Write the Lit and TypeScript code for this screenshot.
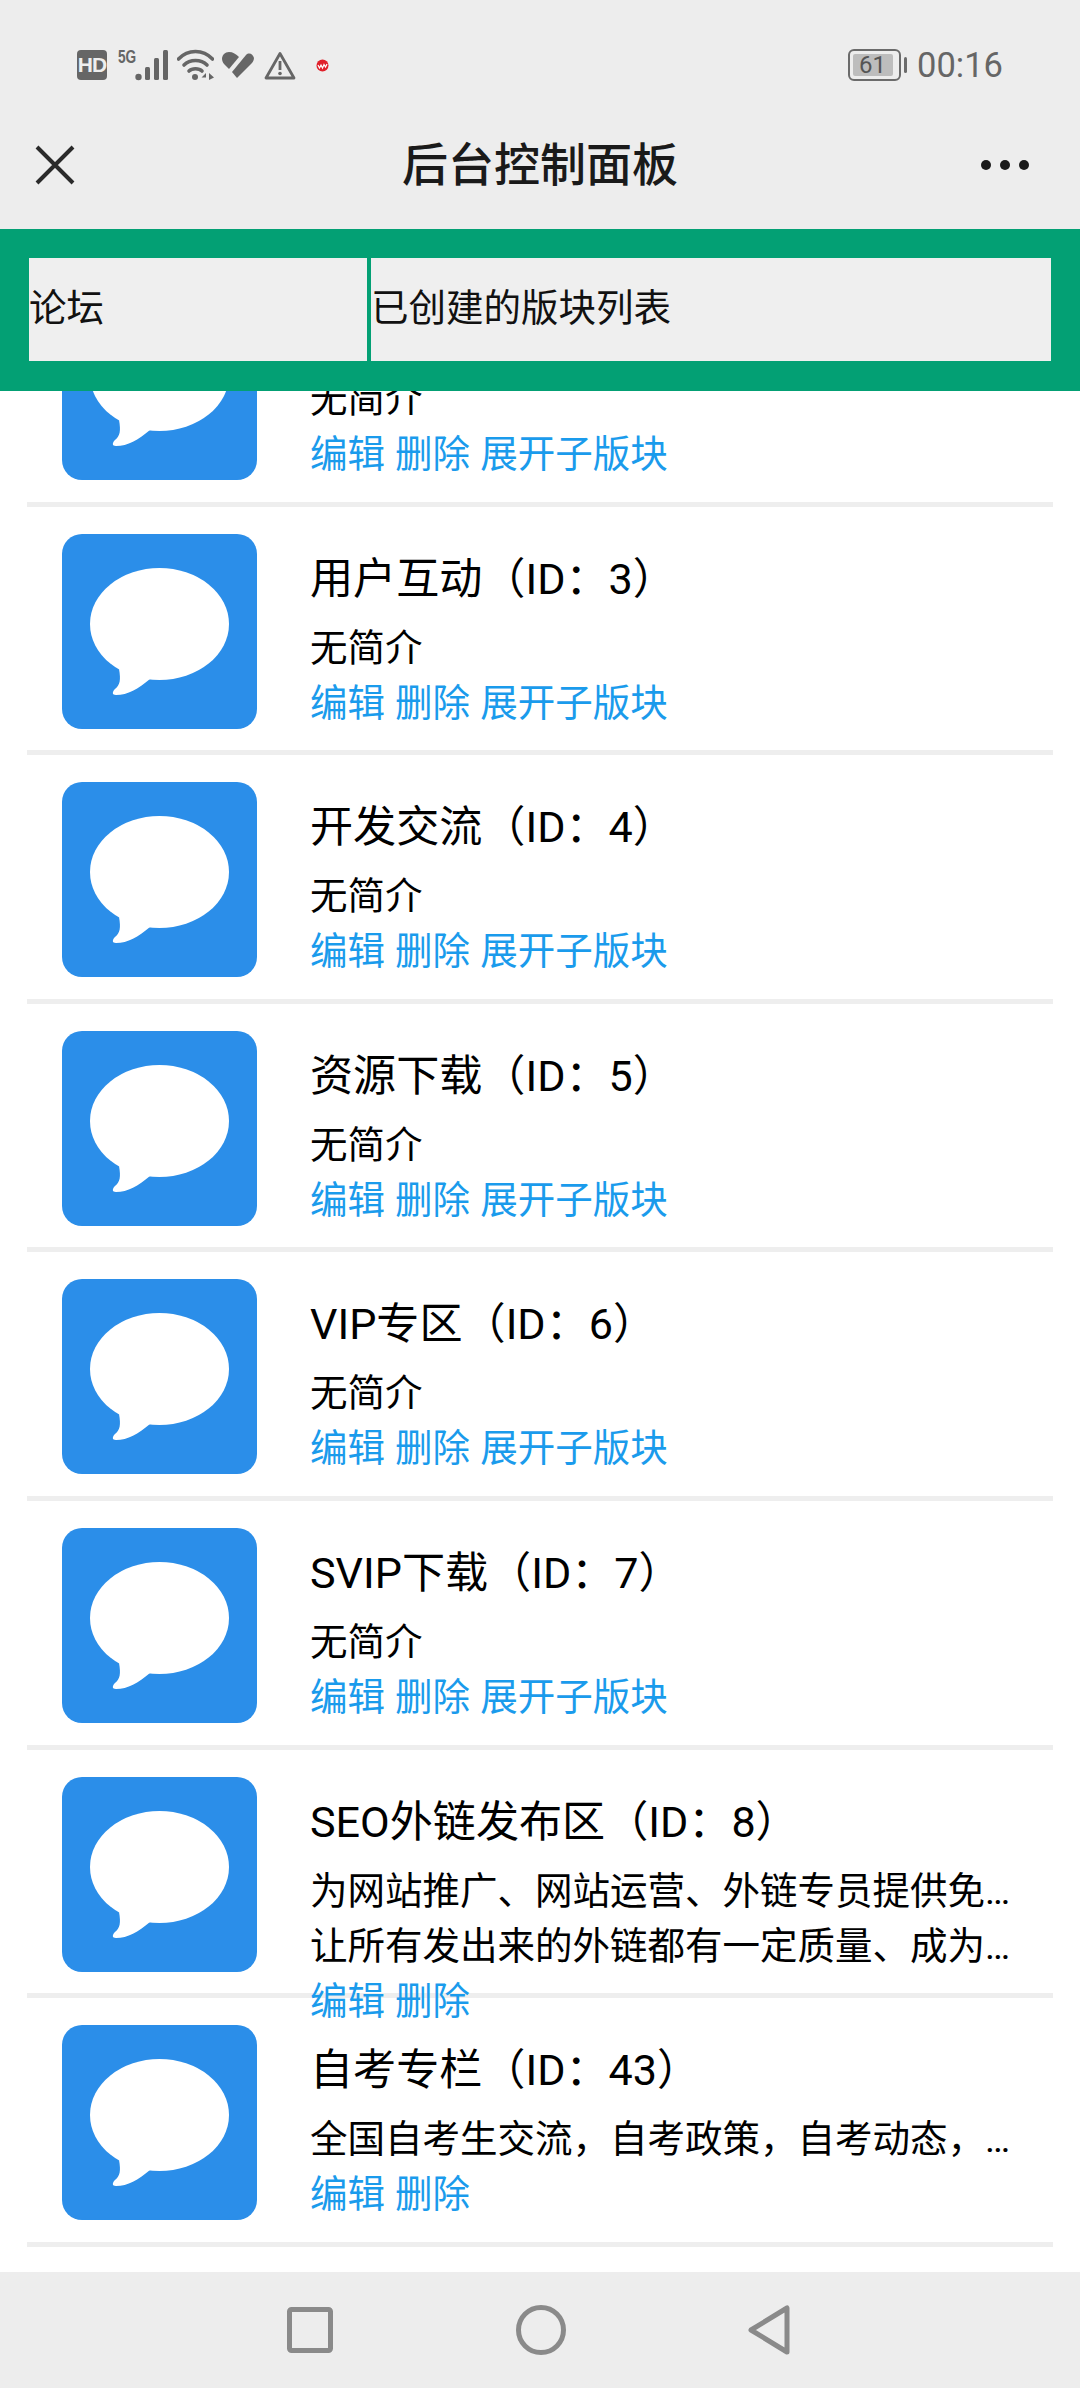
import { LitElement, html, css, svg } from "lit";
import { customElement } from "lit/decorators.js";

interface Board { title: string; intros: string[]; expand: boolean; }

const boards: Board[] = [
  { title: "综合交流（ID：2）", intros: ["无简介"], expand: true },
  { title: "用户互动（ID：3）", intros: ["无简介"], expand: true },
  { title: "开发交流（ID：4）", intros: ["无简介"], expand: true },
  { title: "资源下载（ID：5）", intros: ["无简介"], expand: true },
  { title: "VIP专区（ID：6）", intros: ["无简介"], expand: true },
  { title: "SVIP下载（ID：7）", intros: ["无简介"], expand: true },
  {
    title: "SEO外链发布区（ID：8）",
    intros: [
      "为网站推广、网站运营、外链专员提供免费的外链发布平台，",
      "让所有发出来的外链都有一定质量、成为真正有价值的外链资源",
    ],
    expand: false,
  },
  { title: "自考专栏（ID：43）", intros: ["全国自考生交流，自考政策，自考动态，自考经验分享与讨论"], expand: false },
];

const bubble = svg`
  <rect width="195" height="195" rx="20" fill="#2b8ee9"></rect>
  <ellipse cx="97.5" cy="90" rx="69.5" ry="56" fill="#fff"></ellipse>
  <path d="M57 135 C59 146 58 151 53 155 C50 158 50 161 54 161 C66 161 76 155 88 145 Z" fill="#fff"></path>`;

@customElement("app-root")
export class AppRoot extends LitElement {
  static styles = css`
    :host {
      display: block;
      width: 1080px;
      height: 2388px;
      font-family: Roboto, "Noto Sans CJK SC", sans-serif;
      background: #fff;
      color: #000;
    }
    .page { display: flex; flex-direction: column; height: 2388px; overflow: hidden; }
    .head { background: #ededed; height: 229px; flex: none; }
    .status { height: 130px; display: flex; align-items: center; padding: 0 77px; }
    .status svg { display: block; flex: none; }
    .status-left { display: flex; align-items: center; }
    .hd {
      width: 30px; height: 30px; border-radius: 4px; background: #666; color: #eee;
      font: 700 21px/30px "Liberation Sans", sans-serif; text-align: center; letter-spacing: -0.8px;
    }
    .fiveg {
      width: 18px; margin: -16px 0 0 11px; color: #666; white-space: nowrap;
      font: 700 19px/16px "Liberation Sans", sans-serif;
      transform: scaleX(0.72); transform-origin: left center;
    }
    .signal { margin-left: -1px; }
    .wifi { margin-left: 7px; }
    .heart { margin-left: 8px; }
    .warn { margin-left: 10px; }
    .rec { margin-left: 20px; }
    .status-right { margin-left: auto; display: flex; align-items: center; }
    .battery {
      width: 53px; height: 32px; box-sizing: border-box; border: 2.5px solid #6b6b6b; border-radius: 6px;
      padding: 3px; display: flex;
    }
    .battery span {
      width: 40px; background: #bdbdbd; color: #555; border-radius: 2px;
      font: 400 24px/22px Roboto, sans-serif; text-align: center;
    }
    .nub { width: 3.5px; height: 16px; background: #6b6b6b; border-radius: 2px; margin-left: 3px; }
    .time { font-size: 34.5px; line-height: 40px; color: #666; margin-left: 10px; }
    .toolbar {
      height: 70px; display: grid; grid-template-columns: 1fr auto 1fr; align-items: center;
      padding: 0 51px 0 51px;
    }
    .close { margin-left: -16px; }
    .title { font-size: 46px; line-height: 70px; color: #1a1a1a; font-weight: 500; }
    .more { justify-self: end; }
    .tabs {
      flex: none; background: #03a074; padding: 29px 29px 30px; display: flex; gap: 4px; height: 103px;
    }
    .tab {
      background: #efefef; font-size: 37.5px; line-height: 100px; height: 103px; color: #111;
      white-space: nowrap; overflow: hidden;
    }
    .tab.a { width: 338px; }
    .tab.b { flex: 1; }
    .list { flex: 1; overflow: hidden; min-height: 0; }
    .rows { margin-top: -133px; padding: 0 27px; }
    .row {
      box-sizing: border-box; height: 248.6px; border-bottom: 5px solid #eee;
      display: flex; padding: 27px 34px 0 35px; gap: 53px;
    }
    .icon { width: 195px; height: 195px; flex: none; display: block; }
    .text { flex: 1; min-width: 0; padding-top: 16px; }
    .name { font-size: 43.1px; line-height: 60px; margin-bottom: 11px; white-space: nowrap; }
    .intro {
      font-size: 37.5px; line-height: 55px; white-space: nowrap; overflow: hidden; text-overflow: ellipsis;
    }
    .links { font-size: 37.5px; line-height: 55px; color: #1a9bec; white-space: nowrap; word-spacing: 0.8px; }
    .nav {
      flex: none; height: 116px; background: #ededed; display: flex; align-items: center;
      padding: 0 290px 0 287px; justify-content: space-between;
    }
    .nav svg { display: block; }
  `;

  render() {
    return html`
      <div class="page">
        <div class="head">
          <div class="status">
            <div class="status-left">
              <div class="hd">HD</div>
              <div class="fiveg">5G</div>
              <svg class="signal" width="35" height="32" viewBox="0 0 35 32" fill="#666">
                <circle cx="3.5" cy="28" r="3.2"></circle>
                <rect x="10" y="18" width="5" height="13" rx="1.5"></rect>
                <rect x="19" y="9" width="5" height="22" rx="1.5"></rect>
                <rect x="28" y="1" width="5" height="30" rx="1.5"></rect>
              </svg>
              <svg class="wifi" width="37" height="32" viewBox="0 0 37 32" fill="none" stroke="#666" stroke-width="3.6" stroke-linecap="round">
                <path d="M1.5 10 C11 0 26 0 35.5 10"></path>
                <path d="M7 16 C13 10 24 10 30 16"></path>
                <path d="M12 22 C15 19 22 19 25 22"></path>
                <circle cx="18" cy="28" r="3" fill="#666" stroke="none"></circle>
                <path d="M29 24 L24.5 28.5 H29 Z M32 24 L37 28.5 L32 31 Z" fill="#666" stroke="none"></path>
              </svg>
              <svg class="heart" width="32" height="28" viewBox="0 0 32 28" fill="#666">
                <path d="M7 1 C3 1 0 4 0 8 C0 11 2 13 4 15 L7 18 L17 6 C14 3 11 1 7 1 Z"></path>
                <path d="M10 21 L24 4 C27 1 31 3 32 7 C32 10 30 12 28 14 L15 27 Z"></path>
              </svg>
              <svg class="warn" width="32" height="29" viewBox="0 0 32 29">
                <path d="M16 2.5 L30 27 H2 Z" fill="none" stroke="#666" stroke-width="2.8" stroke-linejoin="round"></path>
                <rect x="14.6" y="10" width="2.8" height="9" fill="#666"></rect>
                <circle cx="16" cy="22.5" r="1.8" fill="#666"></circle>
              </svg>
              <svg class="rec" width="13" height="13" viewBox="0 0 13 13">
                <circle cx="6.5" cy="6.5" r="6" fill="#e0202a"></circle>
                <path d="M2 6 L3.5 9 L5 6 L6.5 9 L8 5.5 L9.5 8 L11 5" fill="none" stroke="#fff" stroke-width="1.2"></path>
              </svg>
            </div>
            <div class="status-right">
              <div class="battery"><span>61</span></div>
              <div class="nub"></div>
              <div class="time">00:16</div>
            </div>
          </div>
          <div class="toolbar">
            <svg class="close" width="40" height="40" viewBox="0 0 40 40" stroke="#2a2a2a" stroke-width="4">
              <path d="M2 2 L38 38 M38 2 L2 38"></path>
            </svg>
            <div class="title">后台控制面板</div>
            <svg class="more" width="48" height="10" viewBox="0 0 48 10" fill="#1a1a1a">
              <circle cx="5" cy="5" r="5"></circle>
              <circle cx="24" cy="5" r="5"></circle>
              <circle cx="43" cy="5" r="5"></circle>
            </svg>
          </div>
        </div>
        <div class="tabs">
          <div class="tab a">论坛</div>
          <div class="tab b">已创建的版块列表</div>
        </div>
        <div class="list">
          <div class="rows">
            ${boards.map(
              (b) => html`
                <div class="row">
                  <svg class="icon" viewBox="0 0 195 195">${bubble}</svg>
                  <div class="text">
                    <div class="name">${b.title}</div>
                    ${b.intros.map((t) => html`<div class="intro">${t}</div>`)}
                    <div class="links">编辑 删除${b.expand ? " 展开子版块" : ""}</div>
                  </div>
                </div>
              `
            )}
          </div>
        </div>
        <div class="nav">
          <svg width="46" height="46" viewBox="0 0 46 46">
            <rect x="2.5" y="2.5" width="41" height="41" rx="2" fill="none" stroke="#8a8a8a" stroke-width="5"></rect>
          </svg>
          <svg width="50" height="50" viewBox="0 0 50 50">
            <circle cx="25" cy="25" r="22.5" fill="none" stroke="#8a8a8a" stroke-width="5"></circle>
          </svg>
          <svg width="42" height="50" viewBox="0 0 42 50">
            <path d="M39 3 V47 L3 25 Z" fill="none" stroke="#8a8a8a" stroke-width="5" stroke-linejoin="round"></path>
          </svg>
        </div>
      </div>
    `;
  }
}
